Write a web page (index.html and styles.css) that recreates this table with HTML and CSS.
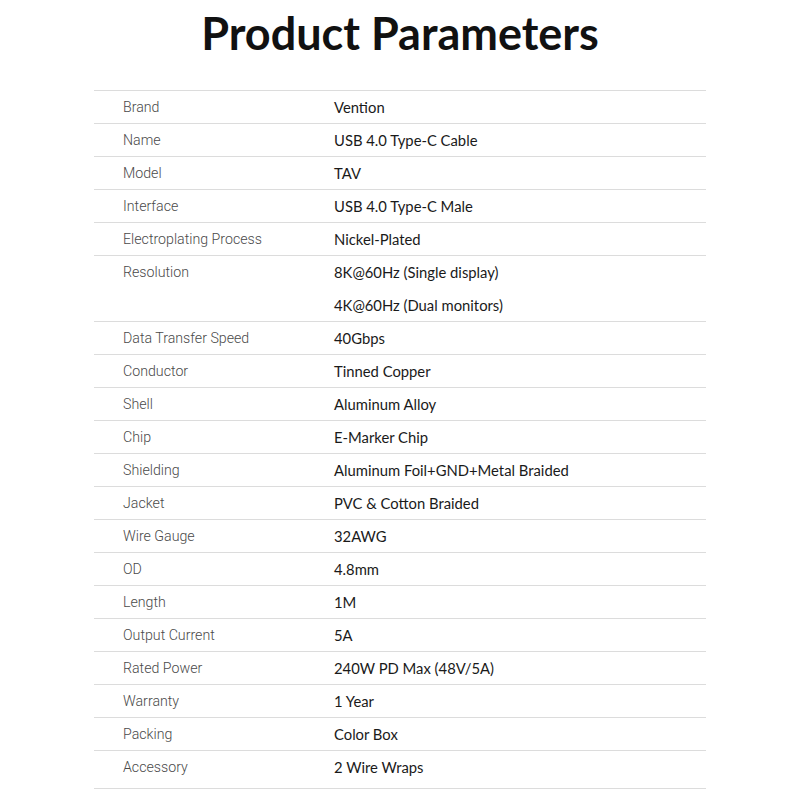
FILE: index.html
```html
<!DOCTYPE html>
<html>
<head>
<meta charset="utf-8">
<link rel="stylesheet" href="styles.css">
</head>
<body>
<div class="page">
  <h1 class="title">Product Parameters</h1>
  <div class="table">
    <div class="row"><div class="label">Brand</div><div class="value">Vention</div></div>
    <div class="row"><div class="label">Name</div><div class="value">USB 4.0 Type-C Cable</div></div>
    <div class="row"><div class="label">Model</div><div class="value">TAV</div></div>
    <div class="row"><div class="label">Interface</div><div class="value">USB 4.0 Type-C Male</div></div>
    <div class="row"><div class="label">Electroplating Process</div><div class="value">Nickel-Plated</div></div>
    <div class="row double"><div class="label">Resolution</div><div class="value"><div class="line">8K@60Hz (Single display)</div><div class="line">4K@60Hz (Dual monitors)</div></div></div>
    <div class="row"><div class="label">Data Transfer Speed</div><div class="value">40Gbps</div></div>
    <div class="row"><div class="label">Conductor</div><div class="value">Tinned Copper</div></div>
    <div class="row"><div class="label">Shell</div><div class="value">Aluminum Alloy</div></div>
    <div class="row"><div class="label">Chip</div><div class="value">E-Marker Chip</div></div>
    <div class="row"><div class="label">Shielding</div><div class="value">Aluminum Foil+GND+Metal Braided</div></div>
    <div class="row"><div class="label">Jacket</div><div class="value">PVC &amp; Cotton Braided</div></div>
    <div class="row"><div class="label">Wire Gauge</div><div class="value">32AWG</div></div>
    <div class="row"><div class="label">OD</div><div class="value">4.8mm</div></div>
    <div class="row"><div class="label">Length</div><div class="value">1M</div></div>
    <div class="row"><div class="label">Output Current</div><div class="value">5A</div></div>
    <div class="row"><div class="label">Rated Power</div><div class="value">240W PD Max (48V/5A)</div></div>
    <div class="row"><div class="label">Warranty</div><div class="value">1 Year</div></div>
    <div class="row"><div class="label">Packing</div><div class="value">Color Box</div></div>
    <div class="row last"><div class="label">Accessory</div><div class="value">2 Wire Wraps</div></div>
  </div>
</div>
</body>
</html>
```

FILE: styles.css
```css
html, body {
  margin: 0;
  padding: 0;
  background: #ffffff;
}
.page {
  width: 800px;
  height: 800px;
  overflow: hidden;
  display: flex;
  flex-direction: column;
  align-items: center;
}
.title {
  flex: none;
  margin: 0;
  padding-top: 8px;
  height: 82px;
  line-height: 50px;
  font-family: Lato, "Liberation Sans", sans-serif;
  font-weight: 700;
  font-size: 45px;
  color: #111111;
  text-align: center;
}
.table {
  flex: none;
  width: 612px;
  border-top: 1px solid #dcdcdc;
}
.row {
  display: flex;
  box-sizing: border-box;
  height: 33px;
  border-bottom: 1px solid #dcdcdc;
  line-height: 33px;
}
.row.double {
  height: 66px;
}
.row.last {
  height: 38px;
  line-height: 32px;
}
.label {
  width: 211px;
  padding-left: 29px;
  flex: none;
  font-family: Roboto, "Liberation Sans", sans-serif;
  font-size: 14.2px;
  font-weight: 300;
  color: #4a4a4a;
}
.value {
  font-family: Lato, "Liberation Sans", sans-serif;
  font-size: 14.8px;
  font-weight: 400;
  color: #1a1a1a;
}
.line {
  height: 33px;
}
```
